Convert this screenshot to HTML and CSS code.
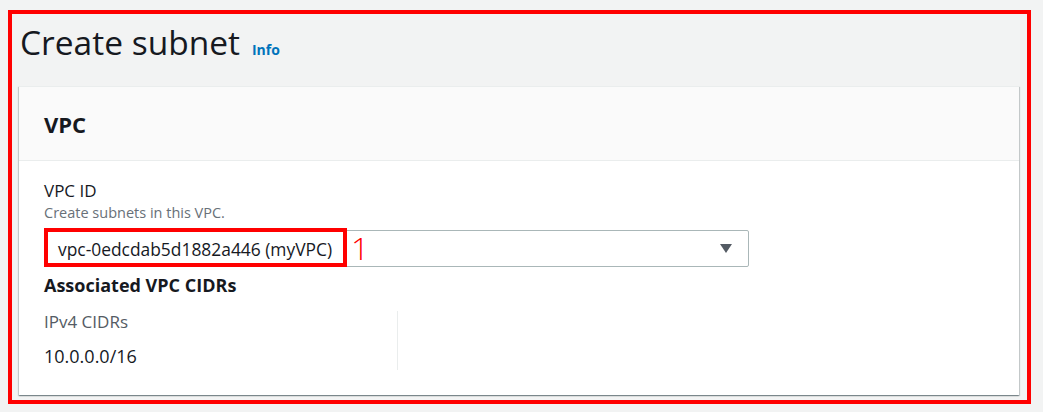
FILE: index.html
```html
<!DOCTYPE html>
<html lang="en">
<head>
    <meta charset="UTF-8">
    <meta name="viewport" content="width=device-width, initial-scale=1.0">
    <title>Create subnet</title>
    <link rel="stylesheet" href="styles.css">
</head>
<body>
    <div class="frame">
        <div class="page-header">
            <h1>Create subnet</h1>
            <a class="info-link" href="#">Info</a>
        </div>

        <!-- VPC section -->
        <div class="card">
            <div class="card-header">
                <h2>VPC</h2>
            </div>
            <div class="card-body">
                <div class="field-label">VPC ID</div>
                <div class="field-desc">Create subnets in this VPC.</div>
                <div class="select-wrap">
                    <div class="select">
                        <span>vpc-0edcdab5d1882a446 (myVPC)</span>
                        <svg class="caret" width="12" height="9" viewBox="0 0 12 9">
                            <path d="M0 0 L12 0 L6 9 Z" fill="#545b64"/>
                        </svg>
                    </div>
                    <span class="callout-box"></span>
                    <span class="callout-num">1</span>
                </div>

                <h3>Associated VPC CIDRs</h3>
                <div class="cidrs">
                    <div class="cidr-col">
                        <div class="cidr-label">IPv4 CIDRs</div>
                        <div class="cidr-value">10.0.0.0/16</div>
                    </div>
                </div>
            </div>
        </div>
    </div>
</body>
</html>
```

FILE: styles.css
```css
body {
    margin: 0;
    background: #f2f3f3;
    font-family: 'Open Sans', 'Noto Sans', sans-serif;
    color: #16191f;
}
.frame {
    margin: 10px 12px 8px 8px;
    border: 4px solid #ff0000;
    padding: 8px 8px 5px 7px;
    height: 373px;
}
.page-header {
    display: flex;
    align-items: baseline;
    gap: 12px;
    padding-left: 1px;
}
h1 {
    margin: 0;
    font-size: 33.5px;
    font-weight: 400;
    line-height: 40px;
}
.info-link {
    font-size: 14px;
    font-weight: 700;
    color: #0073bb;
    text-decoration: none;
}
.card {
    margin-top: 24px;
    background: #fff;
    border-top: 1px solid #eaeded;
    box-shadow: 0 1px 1px 0 rgba(0, 28, 36, 0.3), 1px 1px 1px 0 rgba(0, 28, 36, 0.15), -1px 1px 1px 0 rgba(0, 28, 36, 0.15);
}
.card-header {
    background: #fafafa;
    height: 73px;
    border-bottom: 1px solid #eaeded;
    display: flex;
    align-items: center;
    padding: 0 25px;
}
h2 {
    margin: 0;
    font-size: 22px;
    font-weight: 700;
    line-height: 28px;
}
.card-body {
    padding: 19px 25px 25px;
}
.field-label {
    font-size: 17px;
    line-height: 22px;
}
.field-desc {
    margin-top: 2px;
    font-size: 14.5px;
    line-height: 17px;
    color: #687078;
}
.select-wrap {
    position: relative;
    margin-top: 9px;
    width: 705px;
}
.select {
    height: 35px;
    border: 1px solid #aab7b8;
    border-radius: 2px;
    background: #fff;
    display: flex;
    align-items: center;
    justify-content: space-between;
    padding: 0 16px 0 13px;
    font-size: 17.4px;
}
.callout-box {
    position: absolute;
    left: 0;
    top: -2px;
    width: 295px;
    height: 31px;
    border: 4px solid #ff0000;
}
.callout-num {
    position: absolute;
    left: 307px;
    top: -2px;
    font-size: 32px;
    font-weight: 300;
    line-height: 40px;
    color: #ff0000;
}
h3 {
    margin: 7px 0 0;
    font-size: 18px;
    font-weight: 700;
    line-height: 22px;
}
.cidrs {
    display: grid;
    grid-template-columns: 354px 1fr;
    margin-top: 15px;
}
.cidr-col {
    border-right: 1px solid #eaeded;
    padding-bottom: 3px;
}
.cidr-label {
    font-size: 17px;
    line-height: 22px;
    color: #545b64;
}
.cidr-value {
    margin-top: 12px;
    font-size: 18px;
    line-height: 22px;
}
```
